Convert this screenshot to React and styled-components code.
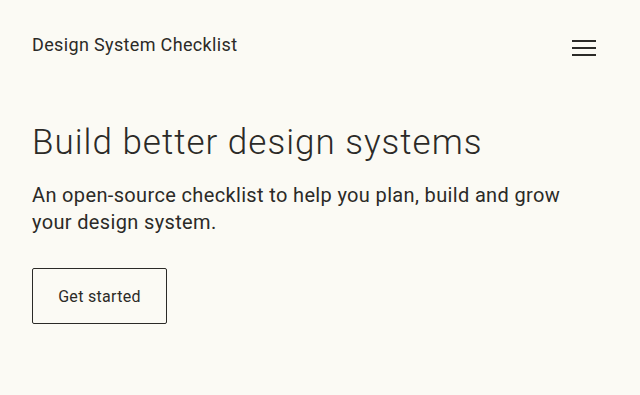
import React from "react";
import styled, { createGlobalStyle } from "styled-components";

const Global = createGlobalStyle`
  html, body { margin: 0; padding: 0; background: #fbfaf4; }
  body { font-family: Roboto, "Noto Sans", sans-serif; color: #2b2a27; }
`;

const Page = styled.div`
  width: 640px;
  height: 395px;
  box-sizing: border-box;
  padding: 0 32px;
  background: #fbfaf4;
`;

const Header = styled.header`
  display: flex;
  align-items: center;
  justify-content: space-between;
  height: 92px;
  padding-bottom: 2px;
  box-sizing: border-box;
`;

const Brand = styled.a`
  font-size: 18px;
  letter-spacing: 0.35px;
  color: #2b2a27;
  text-decoration: none;
  margin-top: -2px;
`;

const MenuButton = styled.button`
  width: 24px;
  height: 16px;
  padding: 0;
  border: 0;
  background: none;
  display: flex;
  flex-direction: column;
  justify-content: space-between;
  margin-right: 12px;
  margin-top: 6px;
  cursor: pointer;
`;

const Bar = styled.span`
  display: block;
  height: 2px;
  width: 100%;
  background: #2b2a27;
`;

const Hero = styled.section`
  padding-top: 29px;
`;

const Title = styled.h1`
  margin: 0;
  font-size: 35px;
  font-weight: 300;
  line-height: 44px;
  letter-spacing: 1px;
`;

const Lead = styled.p`
  margin: 17px 0 0;
  font-size: 20px;
  line-height: 27px;
  letter-spacing: 0.35px;
  max-width: 560px;
`;

const Button = styled.a`
  display: inline-flex;
  align-items: center;
  justify-content: center;
  margin-top: 32px;
  width: 135px;
  height: 56px;
  box-sizing: border-box;
  border: 1px solid #2b2a27;
  border-radius: 2px;
  font-size: 16px;
  letter-spacing: 0.3px;
  color: #2b2a27;
  text-decoration: none;
`;

export default function App() {
  return (
    <>
      <Global />
      <Page>
        <Header>
          <Brand href="#">Design System Checklist</Brand>
          <MenuButton aria-label="Menu">
            <Bar />
            <Bar />
            <Bar />
          </MenuButton>
        </Header>
        <Hero>
          <Title>Build better design systems</Title>
          <Lead>
            An open-source checklist to help you plan, build and grow your
            design system.
          </Lead>
          <Button href="#">Get started</Button>
        </Hero>
      </Page>
    </>
  );
}
